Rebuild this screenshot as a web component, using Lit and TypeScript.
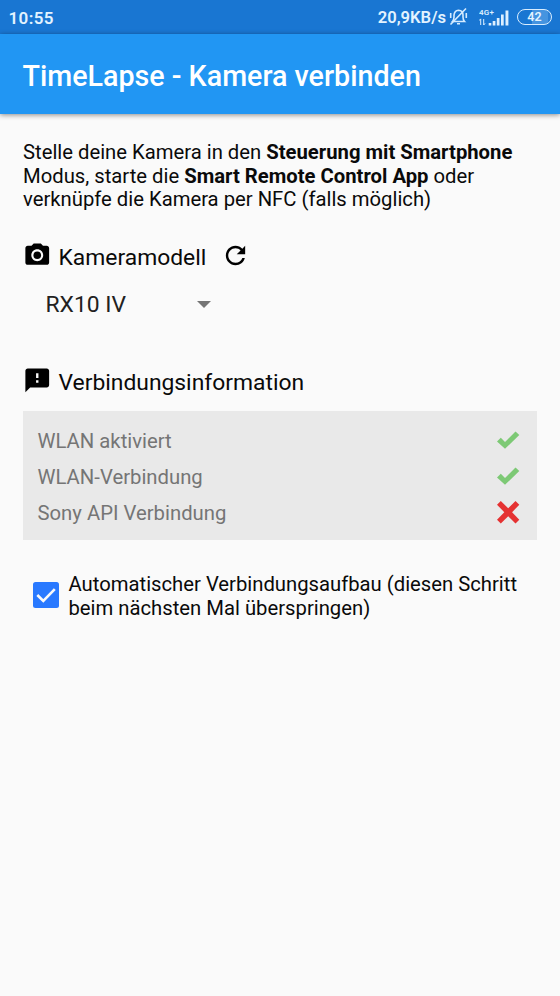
import { LitElement, html, css, svg } from "lit";
import { customElement, property, state } from "lit/decorators.js";

@customElement("status-bar")
class StatusBar extends LitElement {
  static styles = css`
    :host {
      display: flex;
      align-items: center;
      box-sizing: border-box;
      height: 34px;
      padding: 1px 8px 0 8.5px;
      background: #1976d2;
      color: #e3f3ff;
      font-size: 17px;
      font-weight: 600;
    }
    .time { flex: 1; letter-spacing: 0.4px; }
    .rate { font-size: 16.6px; }
    .bell { width: 19px; height: 19px; margin: -2px 0 0 3px; }
    .signal { width: 31px; height: 18px; margin: -1px 0 0 11px; }
    .net { font: 600 8px Roboto, sans-serif; }
    .battery {
      box-sizing: border-box;
      width: 35px;
      height: 16px;
      margin: -1px 0 0 7px;
      border: 1.5px solid #d8edff;
      border-radius: 8px;
      background: linear-gradient(90deg, #1976d2 0 14px, #4594e0 14px 30px, #2a7fd6 30px);
      font-size: 12.5px;
      line-height: 14px;
      text-align: center;
    }
  `;
  render() {
    return html`
      <span class="time">10:55</span>
      <span class="rate">20,9KB/s</span>
      <svg class="bell" viewBox="0 0 19 19" fill="none" stroke="#d5ebff" stroke-width="1.6">
        <path d="M3.5 14.5Q5 13 5 10V8Q5.500 3.500 9.500 3.200Q14 3.500 14 8V10Q14 13 15.500 14.500Z" />
        <path d="M8 16.700H11M1.700 6V11M17.300 6V11M1.500 17.500L17 1.500" />
      </svg>
      <svg class="signal" viewBox="0 0 31 18" fill="#dcefff">
        <text class="net" x="0" y="7" textLength="15">4G+</text>
        <path d="M9.700 15h2.600v2.500H9.700zM13.700 13h2.700v4.500h-2.700zM17.800 10h2.700v7.500h-2.700zM22 6.500h2.700v11H22zM26.500 2.500h2.900v15h-2.900z" />
        <path d="M1.700 17v-6M.3 12.500l1.400-1.700M4.700 11v6M6.100 15.300L4.700 17" fill="none" stroke="#dcefff" />
      </svg>
      <span class="battery">42</span>
    `;
  }
}

const CHECK = svg`<path fill="#7dc975" d="M0 11.500L3.800 7.800L8 12L18.500 1.500L22.300 5L8 18.800Z" />`;
const CROSS = svg`<path fill="#e53232" d="M0 3.700L3.800 0L11.200 7.200L18.500 0L22.300 3.700L15.100 11.200L22.300 18.700L18.500 22.400L11.200 15.200L3.800 22.400L0 18.700L7.300 11.200Z" />`;

@customElement("status-row")
class StatusRow extends LitElement {
  @property() label = "";
  @property({ type: Boolean }) ok = false;
  static styles = css`
    :host {
      display: flex;
      align-items: center;
      justify-content: space-between;
      height: 36px;
      color: #757575;
      font-size: 20.3px;
    }
    svg { width: 23px; height: 23px; }
    .check { margin-top: 1px; }
    .cross { margin-top: -1px; }
  `;
  render() {
    return html`
      <span>${this.label}</span>
      <svg class=${this.ok ? "check" : "cross"} viewBox="0 0 23 23">${this.ok ? CHECK : CROSS}</svg>
    `;
  }
}

@customElement("app-root")
class AppRoot extends LitElement {
  @state() private auto = true;
  static styles = css`
    :host {
      display: block;
      min-height: 996px;
      background: #fafafa;
      color: #0a0a0a;
      font-family: Roboto, sans-serif;
    }
    .toolbar {
      display: flex;
      align-items: center;
      box-sizing: border-box;
      height: 80px;
      padding: 4px 22.5px 0;
      background: #2196f3;
      box-shadow: 0 1px 5px rgba(0, 0, 0, 0.45);
      color: #fff;
    }
    h1 { margin: 0; font-size: 28.65px; font-weight: 500; }
    main { padding: 27px 23px 0; }
    .intro { margin: 0; font-size: 20.25px; line-height: 23.7px; white-space: nowrap; }
    h2 {
      display: flex;
      align-items: center;
      height: 30px;
      margin: 0;
      font-size: 22.85px;
      font-weight: 400;
    }
    .lead { width: 28.500px; height: 28.500px; margin: -4px 7px 0 0; }
    .model { margin-top: 30px; }
    .refresh { width: 29px; height: 29px; margin: -4px 0 0 15px; }
    .select {
      display: flex;
      align-items: center;
      justify-content: space-between;
      width: 165px;
      height: 34px;
      margin: 15px 0 0 22.5px;
      color: #212121;
      font-size: 22.85px;
    }
    .arrow { width: 14px; height: 7px; margin-top: 0; }
    .info { margin-top: 46.5px; }
    .panel {
      box-sizing: border-box;
      height: 129px;
      margin-top: 13.5px;
      padding: 12px 17px 0 14.500px;
      background: #e9e9e9;
    }
    .auto {
      display: flex;
      align-items: center;
      gap: 9.500px;
      margin-top: 32.6px;
      padding-left: 10px;
      font-size: 20.25px;
      line-height: 23.8px;
      white-space: nowrap;
    }
    .box { width: 26px; height: 26px; margin-top: -4px; }
  `;
  render() {
    return html`
      <status-bar></status-bar>
      <header class="toolbar"><h1>TimeLapse - Kamera verbinden</h1></header>
      <main>
        <p class="intro">
          Stelle deine Kamera in den <b>Steuerung mit Smartphone</b><br />
          Modus, starte die <b>Smart Remote Control App</b> oder<br />
          verknüpfe die Kamera per NFC (falls möglich)
        </p>
        <h2 class="model">
          <svg class="lead" viewBox="0 0 24 24">
            <path d="M9 2L7.170 4H4c-1.100 0-2 .9-2 2v12c0 1.100.9 2 2 2h16c1.100 0 2-.9 2-2V6c0-1.100-.9-2-2-2h-3.170L15 2H9zm3 15c-2.760 0-5-2.240-5-5s2.240-5 5-5 5 2.240 5 5-2.240 5-5 5z" />
            <circle cx="12" cy="12" r="3.200" />
          </svg>
          Kameramodell
          <svg class="refresh" viewBox="0 0 24 24">
            <path d="M17.650 6.350C16.200 4.900 14.210 4 12 4c-4.420 0-7.990 3.580-7.990 8s3.570 8 7.990 8c3.730 0 6.840-2.550 7.730-6h-2.080c-.82 2.330-3.040 4-5.650 4-3.310 0-6-2.690-6-6s2.690-6 6-6c1.660 0 3.140.69 4.220 1.780L13 11h7V4l-2.350 2.350z" />
          </svg>
        </h2>
        <div class="select">
          RX10 IV
          <svg class="arrow" viewBox="0 0 14 7"><path fill="#757575" d="M0 0H14L7 7Z" /></svg>
        </div>
        <h2 class="info">
          <svg class="lead" viewBox="0 0 24 24">
            <path d="M20 2H4c-1.100 0-1.990.9-1.990 2L2 22l4-4h14c1.100 0 2-.9 2-2V4c0-1.100-.9-2-2-2zm-7 12h-2v-2h2v2zm0-4h-2V6h2v4z" />
          </svg>
          Verbindungsinformation
        </h2>
        <section class="panel">
          <status-row label="WLAN aktiviert" ok></status-row>
          <status-row label="WLAN-Verbindung" ok></status-row>
          <status-row label="Sony API Verbindung"></status-row>
        </section>
        <div class="auto" @click=${() => (this.auto = !this.auto)}>
          <svg class="box" viewBox="0 0 26 26">
            <rect width="26" height="26" rx="2.500" fill=${this.auto ? "#2979ff" : "#757575"} />
            ${this.auto
              ? svg`<path d="M4.300 13L10.300 19L21.800 7.200" fill="none" stroke="#fafafa" stroke-width="2.600" />`
              : svg`<rect x="3" y="3" width="20" height="20" fill="#fafafa" />`}
          </svg>
          <span>Automatischer Verbindungsaufbau (diesen Schritt<br />beim nächsten Mal überspringen)</span>
        </div>
      </main>
    `;
  }
}
